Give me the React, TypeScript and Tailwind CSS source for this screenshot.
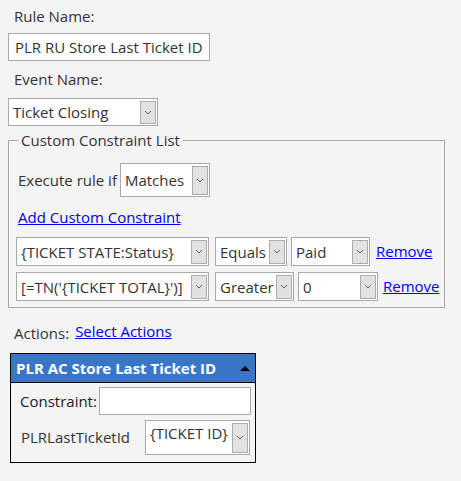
import React from "react";

function Chevron() {
  return (
    <svg width="8" height="5" viewBox="0 0 8 5" className="block">
      <path d="M1 1 L4 4 L7 1" fill="none" stroke="#606060" strokeWidth="1" />
    </svg>
  );
}

function Select({
  text,
  w,
  h,
  top,
}: {
  text: string;
  w: number;
  h: number;
  top?: boolean;
}) {
  return (
    <div
      className={`flex shrink-0 border border-[#a9a9a9] bg-white pr-[1px] ${top ? "items-start" : "items-center"}`}
      style={{ width: w, height: h }}
    >
      <span className={`flex-1 overflow-hidden whitespace-nowrap pl-[4px] leading-[20px] ${top ? "pt-[2px]" : ""}`}>
        {text}
      </span>
      <div
        className="flex shrink-0 items-center justify-center self-center border border-[#adadad] bg-[#e1e1e1]"
        style={{ width: 16, height: h - 5 }}
      >
        <Chevron />
      </div>
    </div>
  );
}

export default function App() {
  return (
    <div
      className="h-[481px] w-[461px] bg-[#f4f4f4] px-2 text-[15px] text-[#333]"
      style={{ fontFamily: '"Open Sans", "Noto Sans", sans-serif' }}
    >
      <div className="pl-[6px] pt-[5px] leading-[22px]">Rule Name:</div>
      <div className="mt-[6px] flex h-[28px] w-[202px] items-center overflow-hidden border border-[#a9a9a9] bg-white pl-[6px] whitespace-nowrap">
        PLR RU Store Last Ticket ID
      </div>
      <div className="mt-[7px] pl-[6px] leading-[22px]">Event Name:</div>
      <div className="mt-[8px]">
        <Select text="Ticket Closing" w={150} h={28} />
      </div>

      <fieldset className="mt-[4px] w-[437px] border border-[#aaa] pb-[6px] pl-[7px]">
        <legend className="ml-[2px] px-[3px] leading-[20px]">Custom Constraint List</legend>
        <div className="mt-[13px] flex items-center">
          <span className="ml-[2px] mr-[3px]">Execute rule if</span>
          <Select text="Matches" w={90} h={34} />
        </div>
        <div className="mt-[8px] ml-[2px] leading-[24px]">
          <a href="#" className="text-[#0000ee] underline">
            Add Custom Constraint
          </a>
        </div>
        <div className="mt-[8px] flex items-center">
          <Select text="{TICKET STATE:Status}" w={193} h={29} />
          <div className="ml-[6px]">
            <Select text="Equals" w={72} h={29} />
          </div>
          <div className="ml-[4px]">
            <Select text="Paid" w={79} h={29} />
          </div>
          <a href="#" className="ml-[6px] text-[#0000ee] underline">
            Remove
          </a>
        </div>
        <div className="mt-[6px] flex items-center">
          <Select text="[=TN('{TICKET TOTAL}')]" w={193} h={29} />
          <div className="ml-[6px]">
            <Select text="Greater" w={79} h={29} />
          </div>
          <div className="ml-[4px]">
            <Select text="0" w={80} h={29} />
          </div>
          <a href="#" className="ml-[5px] text-[#0000ee] underline">
            Remove
          </a>
        </div>
      </fieldset>

      <div className="mt-[12px] flex items-end pl-[6px] leading-[22px]">
        <span className="translate-y-[2px]">Actions:</span>
        <a href="#" className="ml-[6px] text-[#0000ee] underline">
          Select Actions
        </a>
      </div>

      <div className="ml-[2px] mt-[11px] w-[246px] border border-black bg-[#f4f4f4]">
        <div className="flex h-[29px] items-center justify-between border-b border-black bg-[#3a76c8] pl-[5px] pr-[5px]">
          <span className="whitespace-nowrap font-bold text-white">PLR AC Store Last Ticket ID</span>
          <span className="h-0 w-0 border-x-[5px] border-b-[5px] border-x-transparent border-b-black" />
        </div>
        <div className="pb-[7px] pt-[4px]">
          <div className="flex items-center pl-[9px]">
            <span className="text-[#222]">Constraint:</span>
            <div className="ml-auto mr-[4px] h-[28px] w-[152px] border border-[#a9a9a9] bg-white" />
          </div>
          <div className="mt-[5px] flex items-center pl-[10px]">
            <span>PLRLastTicketId</span>
            <div className="ml-auto mr-[5px]">
              <Select text="{TICKET ID}" w={105} h={35} top />
            </div>
          </div>
        </div>
      </div>
    </div>
  );
}
